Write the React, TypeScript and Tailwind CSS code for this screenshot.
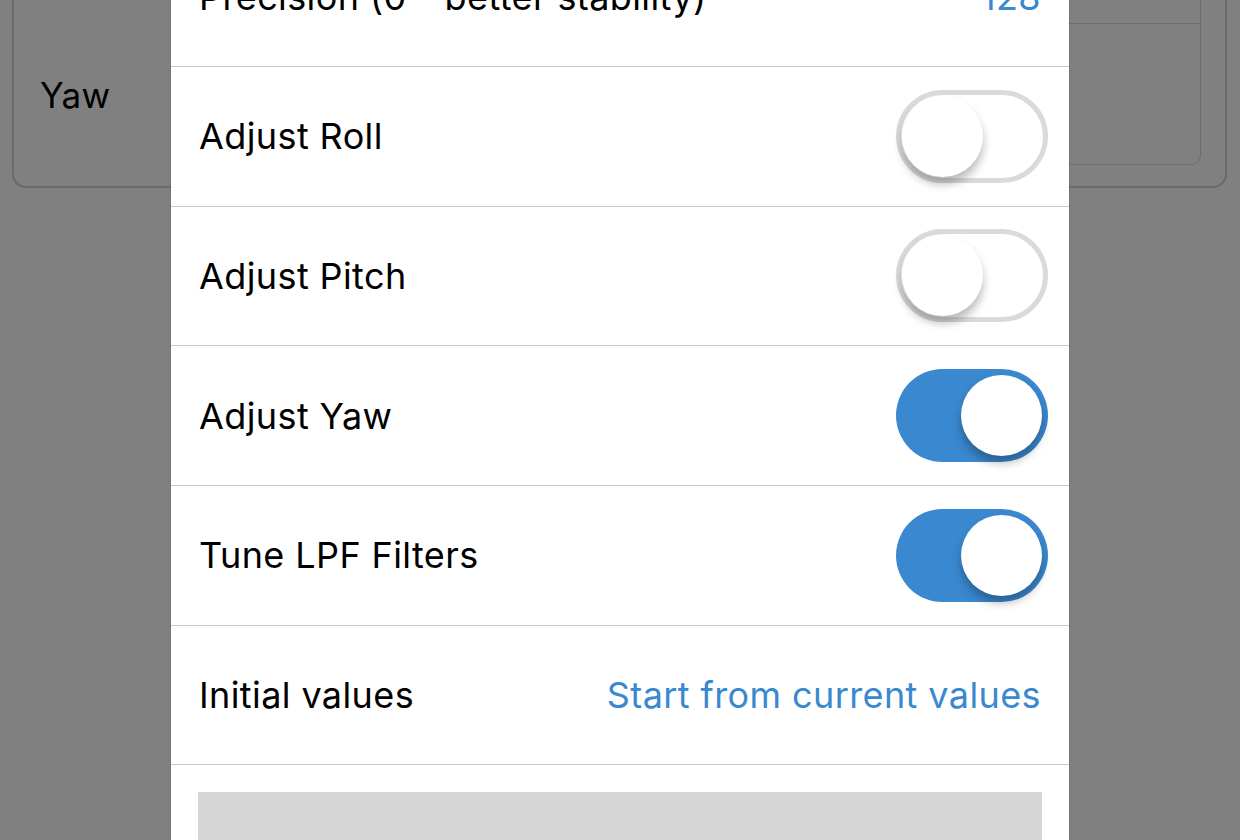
import React, { useState } from 'react';

type ToggleProps = { on: boolean; onChange: () => void };

function Toggle({ on, onChange }: ToggleProps) {
  return (
    <button
      onClick={onChange}
      className={`relative flex items-center w-[152px] h-[93px] rounded-full shrink-0 ${
        on ? 'bg-[#3a88cf] justify-end' : 'bg-white border-[5px] border-[#dadade] justify-start'
      }`}
    >
      <span
        className={`block w-[81px] h-[81px] rounded-full bg-white shadow-[0_7px_10px_rgba(0,0,0,0.28)] ${
          on ? 'mr-[6px]' : 'ml-[1px]'
        }`}
      />
    </button>
  );
}

export default function App() {
  const [toggles, setToggles] = useState({ roll: false, pitch: false, yaw: true, lpf: true });

  const flip = (k: keyof typeof toggles) => setToggles({ ...toggles, [k]: !toggles[k] });

  const rows: { label: string; key: keyof typeof toggles }[] = [
    { label: 'Adjust Roll', key: 'roll' },
    { label: 'Adjust Pitch', key: 'pitch' },
    { label: 'Adjust Yaw', key: 'yaw' },
    { label: 'Tune LPF Filters', key: 'lpf' },
  ];

  return (
    <div className="relative w-[1240px] h-[840px] overflow-hidden bg-[#808080] font-['Inter','Noto_Sans',sans-serif] text-black">
      {/* Background page (dimmed) */}
      <div className="pl-[12px] pr-[13px] -mt-[112px]">
        <div className="h-[300px] border-2 border-[#6a6a6a] rounded-[14px] flex items-end pb-[21px] pr-[24px]">
          <div className="w-[180px] h-[140px] flex items-center pl-[26px] text-[35px] tracking-[0.3px]">Yaw</div>
          <div className="flex-1 h-[166px] border border-[#6e6e6e] rounded-b-[10px] border-t-0 flex flex-col">
            <div className="h-[25px] border-b border-[#6e6e6e]" />
            <div className="flex-1" />
          </div>
        </div>
      </div>

      {/* Sheet */}
      <div className="absolute left-[171px] top-[-72.8px] w-[898px] bg-white shadow-[0_0_2px_rgba(0,0,0,0.25)] text-[36px] tracking-[0.4px]">
        <div className="h-[139.7px] border-b border-[#c8c8cc] flex items-center justify-between pl-[28px] pr-[28px]">
          <span>Precision (0 - better stability)</span>
          <span className="text-[#3a88cf]">128</span>
        </div>
        {rows.map((r) => (
          <div
            key={r.key}
            className="h-[139.7px] border-b border-[#c8c8cc] flex items-center justify-between pl-[28px] pr-[21px]"
          >
            <span>{r.label}</span>
            <Toggle on={toggles[r.key]} onChange={() => flip(r.key)} />
          </div>
        ))}
        <div className="h-[139.7px] border-b border-[#c8c8cc] flex items-center justify-between pl-[28px] pr-[28px]">
          <span>Initial values</span>
          <button className="text-[#3a88cf]">Start from current values</button>
        </div>
        <div className="px-[27px] pt-[27px]">
          <div className="h-[200px] bg-[#d6d6d6]" />
        </div>
      </div>
    </div>
  );
}
